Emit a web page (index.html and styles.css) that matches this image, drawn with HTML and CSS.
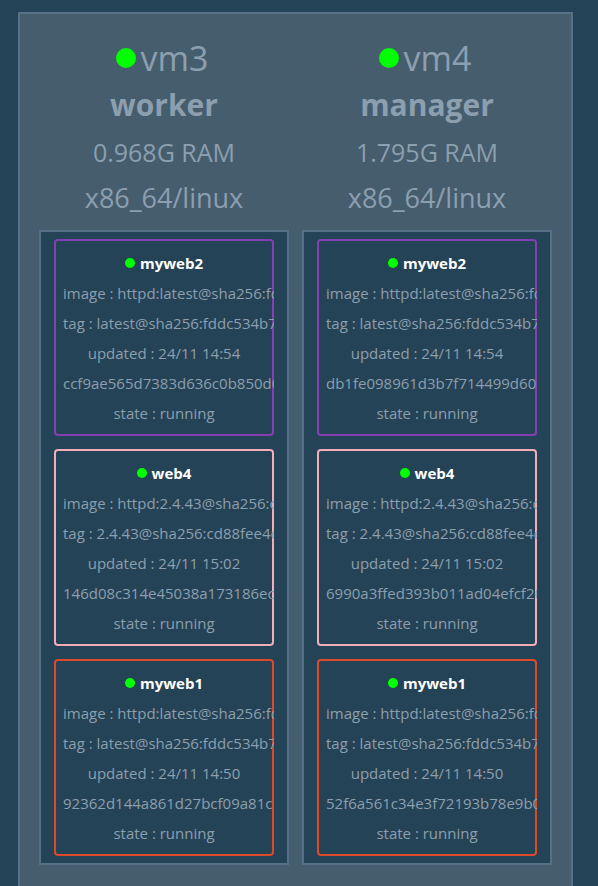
FILE: index.html
```html
<!DOCTYPE html>
<html lang="en">
<head>
<meta charset="utf-8">
<meta name="viewport" content="width=device-width, initial-scale=1">
<title>Swarm nodes</title>
<link rel="stylesheet" href="styles.css">
</head>
<body>
<main class="cluster">
  <section class="node">
    <header class="node-head">
      <h1 class="node-name"><span class="dot dot-large"></span>vm3</h1>
      <p class="node-role">worker</p>
      <p class="node-ram">0.968G RAM</p>
      <p class="node-arch">x86_64/linux</p>
    </header>
    <ul class="tasks">
      <li class="task task-purple">
        <h2 class="task-name"><span class="dot"></span>myweb2</h2>
        <p>image : httpd:latest@sha256:fddc534b7</p>
        <p>tag : latest@sha256:fddc534b7f</p>
        <p>updated : 24/11 14:54</p>
        <p>ccf9ae565d7383d636c0b850d0</p>
        <p>state : running</p>
      </li>
      <li class="task task-pink">
        <h2 class="task-name"><span class="dot"></span>web4</h2>
        <p>image : httpd:2.4.43@sha256:cd88fee4</p>
        <p>tag : 2.4.43@sha256:cd88fee4e</p>
        <p>updated : 24/11 15:02</p>
        <p>146d08c314e45038a173186ec</p>
        <p>state : running</p>
      </li>
      <li class="task task-orange">
        <h2 class="task-name"><span class="dot"></span>myweb1</h2>
        <p>image : httpd:latest@sha256:fddc534b7</p>
        <p>tag : latest@sha256:fddc534b7f</p>
        <p>updated : 24/11 14:50</p>
        <p>92362d144a861d27bcf09a81c</p>
        <p>state : running</p>
      </li>
    </ul>
  </section>
  <section class="node">
    <header class="node-head">
      <h1 class="node-name"><span class="dot dot-large"></span>vm4</h1>
      <p class="node-role">manager</p>
      <p class="node-ram">1.795G RAM</p>
      <p class="node-arch">x86_64/linux</p>
    </header>
    <ul class="tasks">
      <li class="task task-purple">
        <h2 class="task-name"><span class="dot"></span>myweb2</h2>
        <p>image : httpd:latest@sha256:fddc534b7</p>
        <p>tag : latest@sha256:fddc534b7f</p>
        <p>updated : 24/11 14:54</p>
        <p>db1fe098961d3b7f714499d60</p>
        <p>state : running</p>
      </li>
      <li class="task task-pink">
        <h2 class="task-name"><span class="dot"></span>web4</h2>
        <p>image : httpd:2.4.43@sha256:cd88fee4</p>
        <p>tag : 2.4.43@sha256:cd88fee4e</p>
        <p>updated : 24/11 15:02</p>
        <p>6990a3ffed393b011ad04efcf20</p>
        <p>state : running</p>
      </li>
      <li class="task task-orange">
        <h2 class="task-name"><span class="dot"></span>myweb1</h2>
        <p>image : httpd:latest@sha256:fddc534b7</p>
        <p>tag : latest@sha256:fddc534b7f</p>
        <p>updated : 24/11 14:50</p>
        <p>52f6a561c34e3f72193b78e9b0</p>
        <p>state : running</p>
      </li>
    </ul>
  </section>
</main>
</body>
</html>
```
FILE: styles.css
```css
* {
  box-sizing: border-box;
}

body {
  margin: 0;
  min-height: 100vh;
  display: flex;
  flex-direction: column;
  background: #254356;
  color: #8c9fae;
  font-family: "Open Sans", sans-serif;
  font-size: 15px;
  line-height: 30px;
}

h1,
h2,
p,
ul {
  margin: 0;
  padding: 0;
}

.cluster {
  flex: 1;
  display: flex;
  align-items: flex-start;
  gap: 13px;
  margin: 12px 25px 0 18px;
  padding: 21px 19px;
  border: 2px solid #567187;
  border-bottom: 0;
  background: #465d6e;
}

.node {
  flex: 1;
  min-width: 0;
}

.node-head {
  text-align: center;
  padding-bottom: 9px;
}

.node-name {
  display: flex;
  align-items: center;
  justify-content: center;
  gap: 5px;
  padding-right: 4px;
  font-size: 34px;
  font-weight: 400;
  line-height: 46px;
}

.node-role {
  font-size: 30px;
  font-weight: 700;
  line-height: 48px;
}

.node-ram {
  font-size: 25px;
  line-height: 46px;
}

.node-arch {
  font-size: 27px;
  line-height: 46px;
}

.dot {
  flex: none;
  width: 10px;
  height: 10px;
  border-radius: 50%;
  background: #00ff00;
}

.dot-large {
  width: 20px;
  height: 20px;
}

.tasks {
  display: grid;
  grid-template-columns: minmax(0, 1fr);
  gap: 13px;
  padding: 7px 13px;
  border: 2px solid #567187;
  background: #254356;
  list-style: none;
}

/* The outline is an inset shadow so long values run over it to the edge. */
.task {
  display: flex;
  flex-direction: column;
  overflow: hidden;
  padding: 9px 9px 8px;
  border-radius: 4px;
  box-shadow: inset 0 0 0 2px var(--outline);
  text-align: center;
  white-space: nowrap;
}

.task p {
  min-width: 100%;
  align-self: flex-start;
}

.task-name {
  display: flex;
  align-items: center;
  justify-content: center;
  gap: 5px;
  color: #fff;
  font-size: 15px;
  font-weight: 700;
}

.task-purple {
  --outline: #8440b0;
}

.task-pink {
  --outline: #f0aeb8;
}

.task-orange {
  --outline: #dc4a2a;
}
```
